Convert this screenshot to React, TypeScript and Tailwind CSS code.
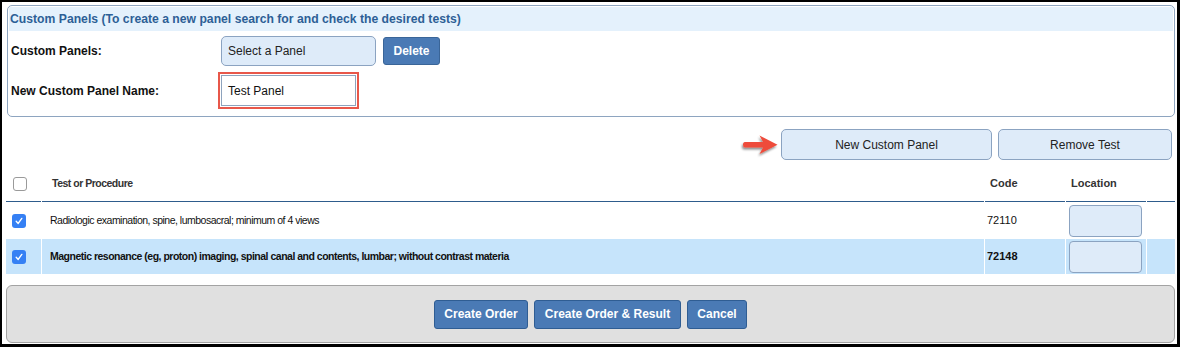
import React from "react";

const font = { fontFamily: '"Liberation Sans", Arial, sans-serif' };

function CheckBox({ checked }: { checked?: boolean }) {
    if (checked) {
        return (
            <div className="w-[14px] h-[14px] rounded-[3px] bg-[#3580f4] flex items-center justify-center">
                <svg width="10" height="10" viewBox="0 0 10 10">
                    <path d="M2.2 5.3 L4.2 7.4 L7.8 2.4" fill="none" stroke="white" strokeWidth="1.4" strokeLinecap="round" strokeLinejoin="round" />
                </svg>
            </div>
        );
    }
    return <div className="w-[14px] h-[14px] rounded-[3px] border border-[#9a9a9a] bg-white" />;
}

function Arrow() {
    return (
        <svg width="42" height="26" viewBox="0 0 42 26" className="mr-[-7px]">
            <defs>
                <filter id="sh" x="-20%" y="-30%" width="150%" height="180%">
                    <feDropShadow dx="-1" dy="2" stdDeviation="1.3" floodColor="#000" floodOpacity="0.45" />
                </filter>
            </defs>
            <path
                d="M5 10 Q3 10 3 12.8 Q3 15.5 5 15.5 L23 15.5 L19.5 22 L37.5 12.8 L19.5 3.5 L23 10 Z"
                fill="#ee4b3b"
                filter="url(#sh)"
                strokeLinejoin="round"
            />
        </svg>
    );
}

const rows = [
    { name: "Radiologic examination, spine, lumbosacral; minimum of 4 views", code: "72110", bold: false },
    { name: "Magnetic resonance (eg, proton) imaging, spinal canal and contents, lumbar; without contrast materia", code: "72148", bold: true },
];

export default function App() {
    return (
        <div style={font} className="w-[1180px] h-[347px] bg-white border-l-2 border-t-2 border-r-[3px] border-b-[3px] border-black pl-[4px] pr-[2px] pt-[3px] text-[#111]">
            {/* Custom panels box */}
            <div className="ml-px border border-[#8ea5c0] rounded-[5px] p-px h-[112px]">
                <div className="h-[24px] bg-[#e4f1fc] flex items-center pl-[1px] text-[12.2px] font-bold text-[#2d5f96]">
                    Custom Panels (To create a new panel search for and check the desired tests)
                </div>
                <div className="flex items-center h-[30px] mt-[5px] pl-[2px]">
                    <div className="w-[210px] text-[12px] font-bold">Custom Panels:</div>
                    <div className="w-[155px] h-[30px] bg-[#deebf9] border border-[#8ba3c1] rounded-[5px] flex items-center pl-[6px] text-[12px] text-[#222]">
                        Select a Panel
                    </div>
                    <button className="ml-[7px] w-[57px] h-[28px] bg-[#4a7ab5] border border-[#3a6598] rounded-[3px] text-white text-[12px] font-bold">
                        Delete
                    </button>
                </div>
                <div className="flex items-center h-[37px] mt-[6px] pl-[2px]">
                    <div className="w-[207px] text-[12px] font-bold">New Custom Panel Name:</div>
                    <div className="border-2 border-[#e8574a] p-px">
                        <div className="w-[135px] h-[31px] border border-[#8ea3bd] flex items-center pl-[6px] text-[12px] text-[#111]">
                            Test Panel
                        </div>
                    </div>
                </div>
            </div>

            {/* Action buttons */}
            <div className="flex justify-end items-center mt-[12px] pr-[3px] gap-[6px]">
                <Arrow />
                <button className="w-[211px] h-[31px] bg-[#deebf9] border border-[#8ba3c1] rounded-[5px] text-[12px] text-[#222]">
                    New Custom Panel
                </button>
                <button className="w-[174px] h-[31px] bg-[#deebf9] border border-[#8ba3c1] rounded-[5px] text-[12px] text-[#222]">
                    Remove Test
                </button>
            </div>

            {/* Tests table */}
            <div className="grid grid-cols-[35px_942px_80px_80px_1fr] gap-x-px mt-[1px]">
                <div className="h-[41px] pt-[5px] border-b border-[#2e5c8c] flex items-center pl-[7px]">
                    <CheckBox />
                </div>
                <div className="h-[41px] pt-[5px] border-b border-[#2e5c8c] flex items-center pl-[10px] text-[10.5px] tracking-[-0.5px] font-bold text-[#333]">
                    Test or Procedure
                </div>
                <div className="h-[41px] pt-[5px] border-b border-[#2e5c8c] flex items-center pl-[5px] text-[11px] font-bold text-[#333]">
                    Code
                </div>
                <div className="h-[41px] pt-[5px] border-b border-[#2e5c8c] flex items-center pl-[5px] text-[11px] font-bold text-[#333]">
                    Location
                </div>
                <div className="h-[41px] border-b border-[#2e5c8c]" />

                {rows.map((r, i) => {
                    const bg = i === 1 ? "bg-[#c6e4fb]" : "bg-white";
                    const h = i === 0 ? "h-[37px]" : "h-[35px]";
                    const weight = r.bold ? "font-bold" : "font-normal";
                    return (
                        <React.Fragment key={r.code}>
                            <div className={`${bg} ${h} flex items-center pl-[6px]`}>
                                <CheckBox checked />
                            </div>
                            <div className={`${bg} ${h} ${weight} flex items-center pl-[8px] text-[10.5px] tracking-[-0.5px]`}>{r.name}</div>
                            <div className={`${bg} ${h} ${weight} flex items-center pl-[2px] text-[11px]`}>{r.code}</div>
                            <div className={`${bg} ${h} flex items-center pl-[3px]`}>
                                <div className="w-[73px] h-[32px] bg-[#deebf9] border border-[#8ba3c1] rounded-[4px]" />
                            </div>
                            <div className={`${bg} ${h}`} />
                        </React.Fragment>
                    );
                })}
            </div>

            {/* Footer */}
            <div className="mt-[11px] h-[58px] bg-[#e0e0e0] border border-[#a3a3a3] rounded-[6px] flex items-center justify-center gap-[6px]">
                <button className="w-[94px] h-[29px] bg-[#4a7ab5] border border-[#2f5d93] rounded-[3px] text-white text-[12px] font-bold">
                    Create Order
                </button>
                <button className="w-[147px] h-[29px] bg-[#4a7ab5] border border-[#2f5d93] rounded-[3px] text-white text-[12px] font-bold">
                    Create Order &amp; Result
                </button>
                <button className="w-[60px] h-[29px] bg-[#4a7ab5] border border-[#2f5d93] rounded-[3px] text-white text-[12px] font-bold">
                    Cancel
                </button>
            </div>
        </div>
    );
}
